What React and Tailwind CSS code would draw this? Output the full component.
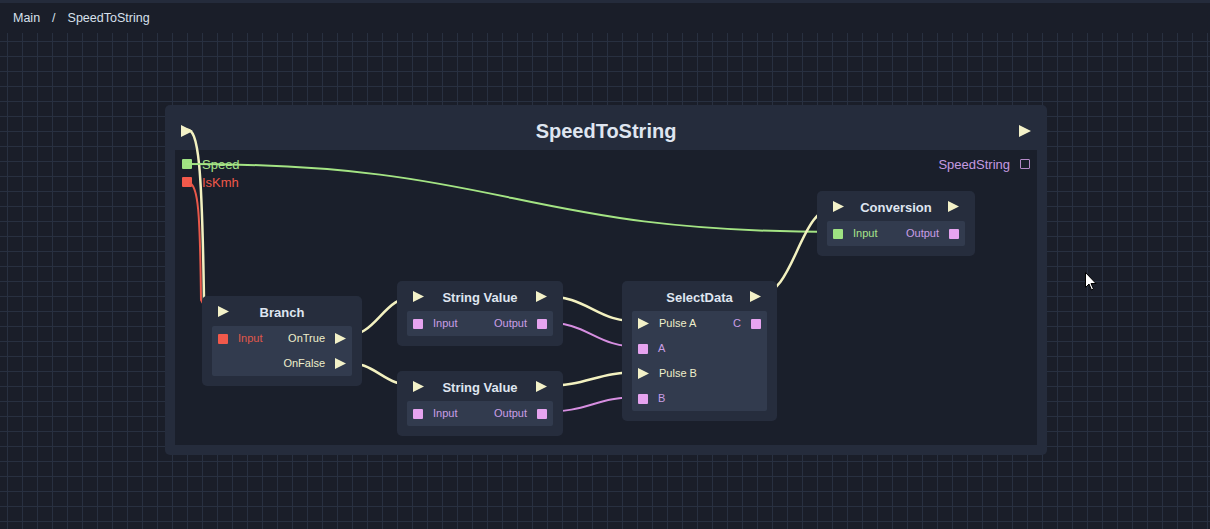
import React from 'react';

const FONT = { fontFamily: '"Liberation Sans", Arial, sans-serif' };

function Exec({ className = '' }) {
  return (
    <svg width="11" height="11" viewBox="0 0 11 11" className={'shrink-0 ' + className}>
      <polygon points="0,0 11,5.5 0,11" fill="#f3f1c8" />
    </svg>
  );
}

function Pin({ pin }) {
  if (pin.type === 'exec') return <Exec />;
  return <div className={'w-[10px] h-[10px] rounded-[1px] shrink-0 ' + pin.color} />;
}

function Row({ left, right }) {
  return (
    <div className="h-[25px] flex items-center px-[6px] text-[11px]">
      {left && (
        <div className="flex items-center gap-[10px]">
          <Pin pin={left} />
          <span className={left.text}>{left.label}</span>
        </div>
      )}
      {right && (
        <div className="ml-auto flex items-center gap-[10px]">
          <span className={right.text}>{right.label}</span>
          <Pin pin={right} />
        </div>
      )}
    </div>
  );
}

function Node({ className, title, execIn, execOut, rows }) {
  return (
    <div className={'absolute rounded-[5px] bg-[#262d3d] px-[10px] pb-[10px] ' + className}>
      <div className="h-[30px] flex items-center px-[6px]">
        <div className="w-[11px]">{execIn && <Exec />}</div>
        <div className="flex-1 text-center text-[13px] font-bold text-[#dfe5f0] mt-[3px]">{title}</div>
        <div className="w-[11px]">{execOut && <Exec />}</div>
      </div>
      <div className="rounded-[2px] bg-[#323b4e]">
        {rows.map((r, i) => (
          <Row key={i} left={r.left} right={r.right} />
        ))}
      </div>
    </div>
  );
}

const cream = 'text-[#efeecb]';
const lav = 'text-[#c99ee6]';
const sqPurple = 'bg-[#e6a3ef]';

const wires = [
  { d: 'M 186 130 C 199 126, 202 170, 204 300 L 222 311', c: '#f3f1c0', w: 2.5 },
  { d: 'M 190 183 C 198 187, 200 210, 201 300 L 222 337', c: '#e9584a', w: 2 },
  { d: 'M 187 164 C 512 164, 512 232, 837 232', c: '#a4e484', w: 2 },
  { d: 'M 341 337 C 380 337, 380 296, 418 296', c: '#f3f1c0', w: 2.5 },
  { d: 'M 341 362 C 380 362, 380 386, 418 386', c: '#f3f1c0', w: 2.5 },
  { d: 'M 542 296 C 592 296, 592 322, 643 322', c: '#f3f1c0', w: 2.5 },
  { d: 'M 541 322 C 592 322, 592 347, 642 347', c: '#d68ee0', w: 2 },
  { d: 'M 542 386 C 592 386, 592 372, 643 372', c: '#f3f1c0', w: 2.5 },
  { d: 'M 541 412 C 592 412, 592 397, 642 397', c: '#d68ee0', w: 2 },
  { d: 'M 756 296 C 797 296, 797 206, 838 206', c: '#f3f1c0', w: 2.5 },
];

export default function App() {
  return (
    <div className="relative w-[1210px] h-[529px] overflow-hidden bg-[#1a1e29] flex flex-col" style={FONT}>
      {/* Breadcrumb bar */}
      <header className="h-[33px] shrink-0 border-t-[3px] border-[#242b3b] flex items-center px-[13px] gap-[12px] text-[12.5px] text-[#d8e0ec]">
        <span>Main</span>
        <span>/</span>
        <span>SpeedToString</span>
      </header>

      {/* Grid canvas */}
      <main className="flex-1 bg-[linear-gradient(to_right,#283040_1px,transparent_1px),linear-gradient(to_bottom,#283040_1px,transparent_1px)] bg-[size:15px_15px] bg-[position:7px_8px]" />

      {/* Graph frame */}
      <div className="absolute left-[165px] top-[105px] w-[882px] h-[350px] rounded-[5px] bg-[#252c3c] flex flex-col px-[10px] pb-[10px]">
        <div className="h-[45px] flex items-center justify-between px-[6px] pt-[6px]">
          <svg width="12" height="12" viewBox="0 0 12 12">
            <polygon points="0,0 12,6 0,12" fill="#f3f1c8" />
          </svg>
          <div className="text-[20px] font-bold text-[#dfe5f0]">SpeedToString</div>
          <svg width="12" height="12" viewBox="0 0 12 12">
            <polygon points="0,0 12,6 0,12" fill="#f3f1c8" />
          </svg>
        </div>
        <div className="flex-1 bg-[#1a1f2b] flex justify-between px-[7px] pt-[9px] text-[13px]">
          <div className="flex flex-col gap-[8px]">
            <div className="flex items-center gap-[10px] h-[10px]">
              <div className="w-[10px] h-[10px] rounded-[1px] bg-[#9fe282]" />
              <span className="text-[#a8e48a] mt-[2px]">Speed</span>
            </div>
            <div className="flex items-center gap-[10px] h-[10px]">
              <div className="w-[10px] h-[10px] rounded-[1px] bg-[#f2594b]" />
              <span className="text-[#f0594a] mt-[2px]">IsKmh</span>
            </div>
          </div>
          <div className="flex items-start gap-[10px]">
            <div className="flex items-center gap-[10px] h-[10px]">
              <span className="text-[#c59ae0] mt-[2px]">SpeedString</span>
              <div className="w-[10px] h-[10px] rounded-[1px] border-[1.5px] border-[#b58ac8]" />
            </div>
          </div>
        </div>
      </div>

      {/* Wires */}
      <svg className="absolute inset-0 pointer-events-none" width="1210" height="529">
        {wires.map((w, i) => (
          <path key={i} d={w.d} fill="none" stroke={w.c} strokeWidth={w.w} strokeLinecap="round" />
        ))}
      </svg>

      {/* Nodes */}
      <Node
        className="left-[202px] top-[296px] w-[160px]"
        title="Branch"
        execIn
        rows={[
          {
            left: { type: 'data', color: 'bg-[#f2594b]', label: 'Input', text: 'text-[#e0584b]' },
            right: { type: 'exec', label: 'OnTrue', text: cream },
          },
          { right: { type: 'exec', label: 'OnFalse', text: cream } },
        ]}
      />
      <Node
        className="left-[397px] top-[281px] w-[166px]"
        title="String Value"
        execIn
        execOut
        rows={[
          {
            left: { type: 'data', color: sqPurple, label: 'Input', text: lav },
            right: { type: 'data', color: sqPurple, label: 'Output', text: lav },
          },
        ]}
      />
      <Node
        className="left-[397px] top-[371px] w-[166px]"
        title="String Value"
        execIn
        execOut
        rows={[
          {
            left: { type: 'data', color: sqPurple, label: 'Input', text: lav },
            right: { type: 'data', color: sqPurple, label: 'Output', text: lav },
          },
        ]}
      />
      <Node
        className="left-[622px] top-[281px] w-[155px]"
        title="SelectData"
        execOut
        rows={[
          {
            left: { type: 'exec', label: 'Pulse A', text: cream },
            right: { type: 'data', color: sqPurple, label: 'C', text: lav },
          },
          { left: { type: 'data', color: sqPurple, label: 'A', text: lav } },
          { left: { type: 'exec', label: 'Pulse B', text: cream } },
          { left: { type: 'data', color: sqPurple, label: 'B', text: lav } },
        ]}
      />
      <Node
        className="left-[817px] top-[191px] w-[158px]"
        title="Conversion"
        execIn
        execOut
        rows={[
          {
            left: { type: 'data', color: 'bg-[#9fe282]', label: 'Input', text: 'text-[#a8e48a]' },
            right: { type: 'data', color: sqPurple, label: 'Output', text: lav },
          },
        ]}
      />

      {/* Mouse cursor */}
      <svg className="absolute left-[1085px] top-[272px]" width="12" height="19" viewBox="0 0 12 19">
        <path d="M0.5 0.5 L0.5 15.5 L4 12 L6.5 18 L8.5 17 L6 11.5 L11 11.5 Z" fill="#ffffff" stroke="#000000" strokeWidth="1" />
      </svg>
    </div>
  );
}
